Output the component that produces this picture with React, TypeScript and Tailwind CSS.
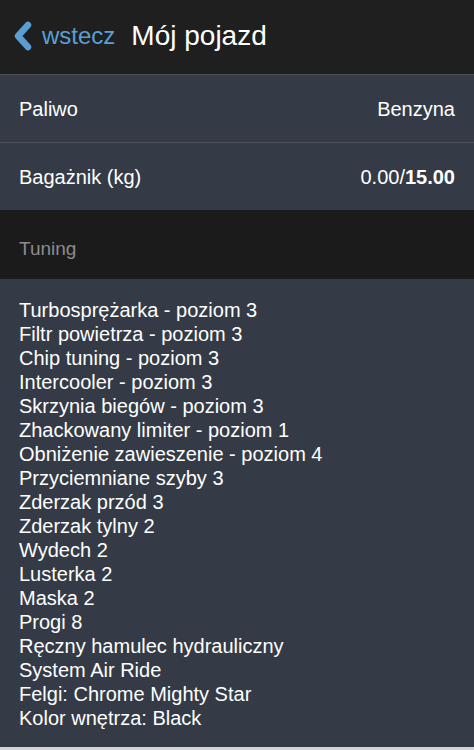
const items = [
    'Turbosprężarka - poziom 3',
    'Filtr powietrza - poziom 3',
    'Chip tuning - poziom 3',
    'Intercooler - poziom 3',
    'Skrzynia biegów - poziom 3',
    'Zhackowany limiter - poziom 1',
    'Obniżenie zawieszenie - poziom 4',
    'Przyciemniane szyby 3',
    'Zderzak przód 3',
    'Zderzak tylny 2',
    'Wydech 2',
    'Lusterka 2',
    'Maska 2',
    'Progi 8',
    'Ręczny hamulec hydrauliczny',
    'System Air Ride',
    'Felgi: Chrome Mighty Star',
    'Kolor wnętrza: Black',
]

export default function App() {
    return (
        <div className="min-h-[750px] w-[474px] bg-[#d4d4d4] font-['Liberation_Sans',Arial,sans-serif]">
            {/* Header */}
            <div className="flex h-[74px] items-center bg-[#1f1f1f] pl-[13px] pb-[2px]">
                <button className="flex items-center gap-[9px] text-[#5a9fd4]">
                    <svg width="20" height="30" viewBox="0 0 20 30">
                        <path d="M15 4 L5 15 L15 26" fill="none" stroke="#5a9fd4" strokeWidth="6.5" strokeLinecap="round" strokeLinejoin="round" />
                    </svg>
                    <span className="text-[24px] leading-none">wstecz</span>
                </button>
                <h1 className="ml-[16px] text-[28px] leading-none text-white">Mój pojazd</h1>
            </div>

            {/* Info rows */}
            <div className="border-t border-[#4b5059] bg-[#343b47]">
                <div className="flex h-[67px] items-center justify-between px-[19px] text-[20px] text-white">
                    <span>Paliwo</span>
                    <span>Benzyna</span>
                </div>
                <div className="flex h-[68px] items-center justify-between border-t border-[#4b5059] px-[19px] text-[20px] text-white">
                    <span>Bagażnik (kg)</span>
                    <span>
                        0.00/<b>15.00</b>
                    </span>
                </div>
            </div>

            {/* Section title */}
            <div className="flex h-[69px] items-center bg-[#1b1b1b] px-[19px] pt-[9px] text-[19px] text-[#8c8c8c]">
                Tuning
            </div>

            {/* Tuning list */}
            <div className="bg-[#343b47] px-[19px] pt-[19px] pb-[17px] text-[20px] leading-[24px] text-white">
                {items.map((item) => (
                    <div key={item}>{item}</div>
                ))}
            </div>
        </div>
    )
}
